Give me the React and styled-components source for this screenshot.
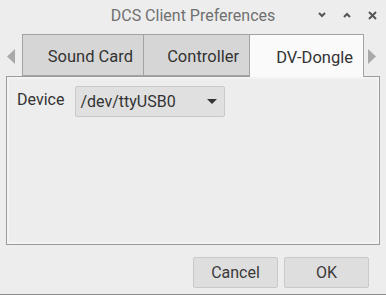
import React from "react";
import styled, { createGlobalStyle } from "styled-components";

const Global = createGlobalStyle`
  html, body { margin: 0; padding: 0; }
  body {
    background: #ededed;
    font-family: Roboto, "Noto Sans", "Liberation Sans", sans-serif;
    width: 386px;
    height: 295px;
    overflow: hidden;
  }
`;

const Window = styled.div`
  width: 386px;
  height: 295px;
  box-sizing: border-box;
  display: flex;
  flex-direction: column;
  background: #ededed;
  border-bottom: 1px solid #8a8a8a;
`;

const TitleBar = styled.div`
  height: 30px;
  position: relative;
  display: flex;
  align-items: center;
  justify-content: center;
`;

const Title = styled.div`
  font-size: 16px;
  color: #707070;
`;

const Controls = styled.div`
  position: absolute;
  right: 9px;
  top: 0;
  height: 30px;
  display: flex;
  align-items: center;
  gap: 17px;
`;

const TabRow = styled.div`
  margin-top: 4px;
  height: 42px;
  display: flex;
  align-items: stretch;
`;

const ArrowCell = styled.div`
  width: ${(p) => p.w}px;
  display: flex;
  align-items: center;
  justify-content: center;
  padding-top: 2px;
`;

const Tab = styled.div`
  width: ${(p) => p.w}px;
  box-sizing: border-box;
  display: flex;
  align-items: center;
  justify-content: flex-end;
  padding-right: 10px;
  padding-top: 3px;
  font-size: 16.5px;
  color: #333;
  background: ${(p) => (p.active ? "#fafafa" : "#d6d6d6")};
  border: 1px solid #a3a3a3;
  border-left: ${(p) => (p.first ? "1px solid #a3a3a3" : "none")};
  border-bottom: ${(p) => (p.active ? "none" : "1px solid #a3a3a3")};
  margin-bottom: ${(p) => (p.active ? "-1px" : "0")};
  position: relative;
  z-index: ${(p) => (p.active ? 2 : 1)};
`;

const Panel = styled.div`
  margin-left: 6px;
  width: 374px;
  height: 169px;
  box-sizing: border-box;
  border: 1px solid #9c9c9c;
  background: #ededed;
  box-shadow: inset 0 0 0 2px #f3f3f3;
  padding: 9px 9px;
  display: flex;
  align-items: flex-start;
  gap: 11px;
`;

const Label = styled.div`
  font-size: 16px;
  color: #333;
  margin-left: 1px;
  margin-top: 4px;
`;

const Combo = styled.div`
  width: 150px;
  height: 31px;
  box-sizing: border-box;
  background: #e0e0e0;
  border: 1px solid #c9c9c9;
  border-radius: 2px;
  display: flex;
  align-items: center;
  justify-content: space-between;
  padding: 0 7px 0 4px;
  font-size: 16px;
  color: #333;
`;

const ButtonRow = styled.div`
  flex: 1;
  display: flex;
  justify-content: flex-end;
  align-items: flex-start;
  gap: 6px;
  padding: 12px 17px 0 0;
`;

const Button = styled.div`
  width: 85px;
  height: 31px;
  box-sizing: border-box;
  background: #dedede;
  border: 1px solid #c9c9c9;
  border-radius: 2px;
  display: flex;
  align-items: center;
  justify-content: center;
  font-size: 16px;
  color: #3a3a3a;
`;

const Chevron = ({ up }) => (
  <svg width="8" height="6" viewBox="0 0 8 6">
    <path
      d={up ? "M1 5 L4 2 L7 5" : "M1 1 L4 4 L7 1"}
      fill="none"
      stroke="#555"
      strokeWidth="2"
    />
  </svg>
);

const Close = () => (
  <svg width="9" height="9" viewBox="0 0 9 9">
    <path d="M1 1 L8 8 M8 1 L1 8" stroke="#555" strokeWidth="2" />
  </svg>
);

const Tri = ({ dir }) => (
  <svg width="8" height="15" viewBox="0 0 8 15">
    <path d={dir === "left" ? "M8 0 L0 7.5 L8 15 Z" : "M0 0 L8 7.5 L0 15 Z"} fill="#a9a9a9" />
  </svg>
);

const Drop = () => (
  <svg width="10" height="5" viewBox="0 0 10 5">
    <path d="M0 0 L10 0 L5 5 Z" fill="#333" />
  </svg>
);

export default function App() {
  return (
    <>
      <Global />
      <Window>
        <TitleBar>
          <Title>DCS Client Preferences</Title>
          <Controls>
            <Chevron />
            <Chevron up />
            <Close />
          </Controls>
        </TitleBar>
        <TabRow>
          <ArrowCell w={22}>
            <Tri dir="left" />
          </ArrowCell>
          <Tab w={122} first>Sound Card</Tab>
          <Tab w={106}>Controller</Tab>
          <Tab w={114} active>DV-Dongle</Tab>
          <ArrowCell w={16}>
            <Tri dir="right" />
          </ArrowCell>
        </TabRow>
        <Panel>
          <Label>Device</Label>
          <Combo>
            <span>/dev/ttyUSB0</span>
            <Drop />
          </Combo>
        </Panel>
        <ButtonRow>
          <Button>Cancel</Button>
          <Button>OK</Button>
        </ButtonRow>
      </Window>
    </>
  );
}
